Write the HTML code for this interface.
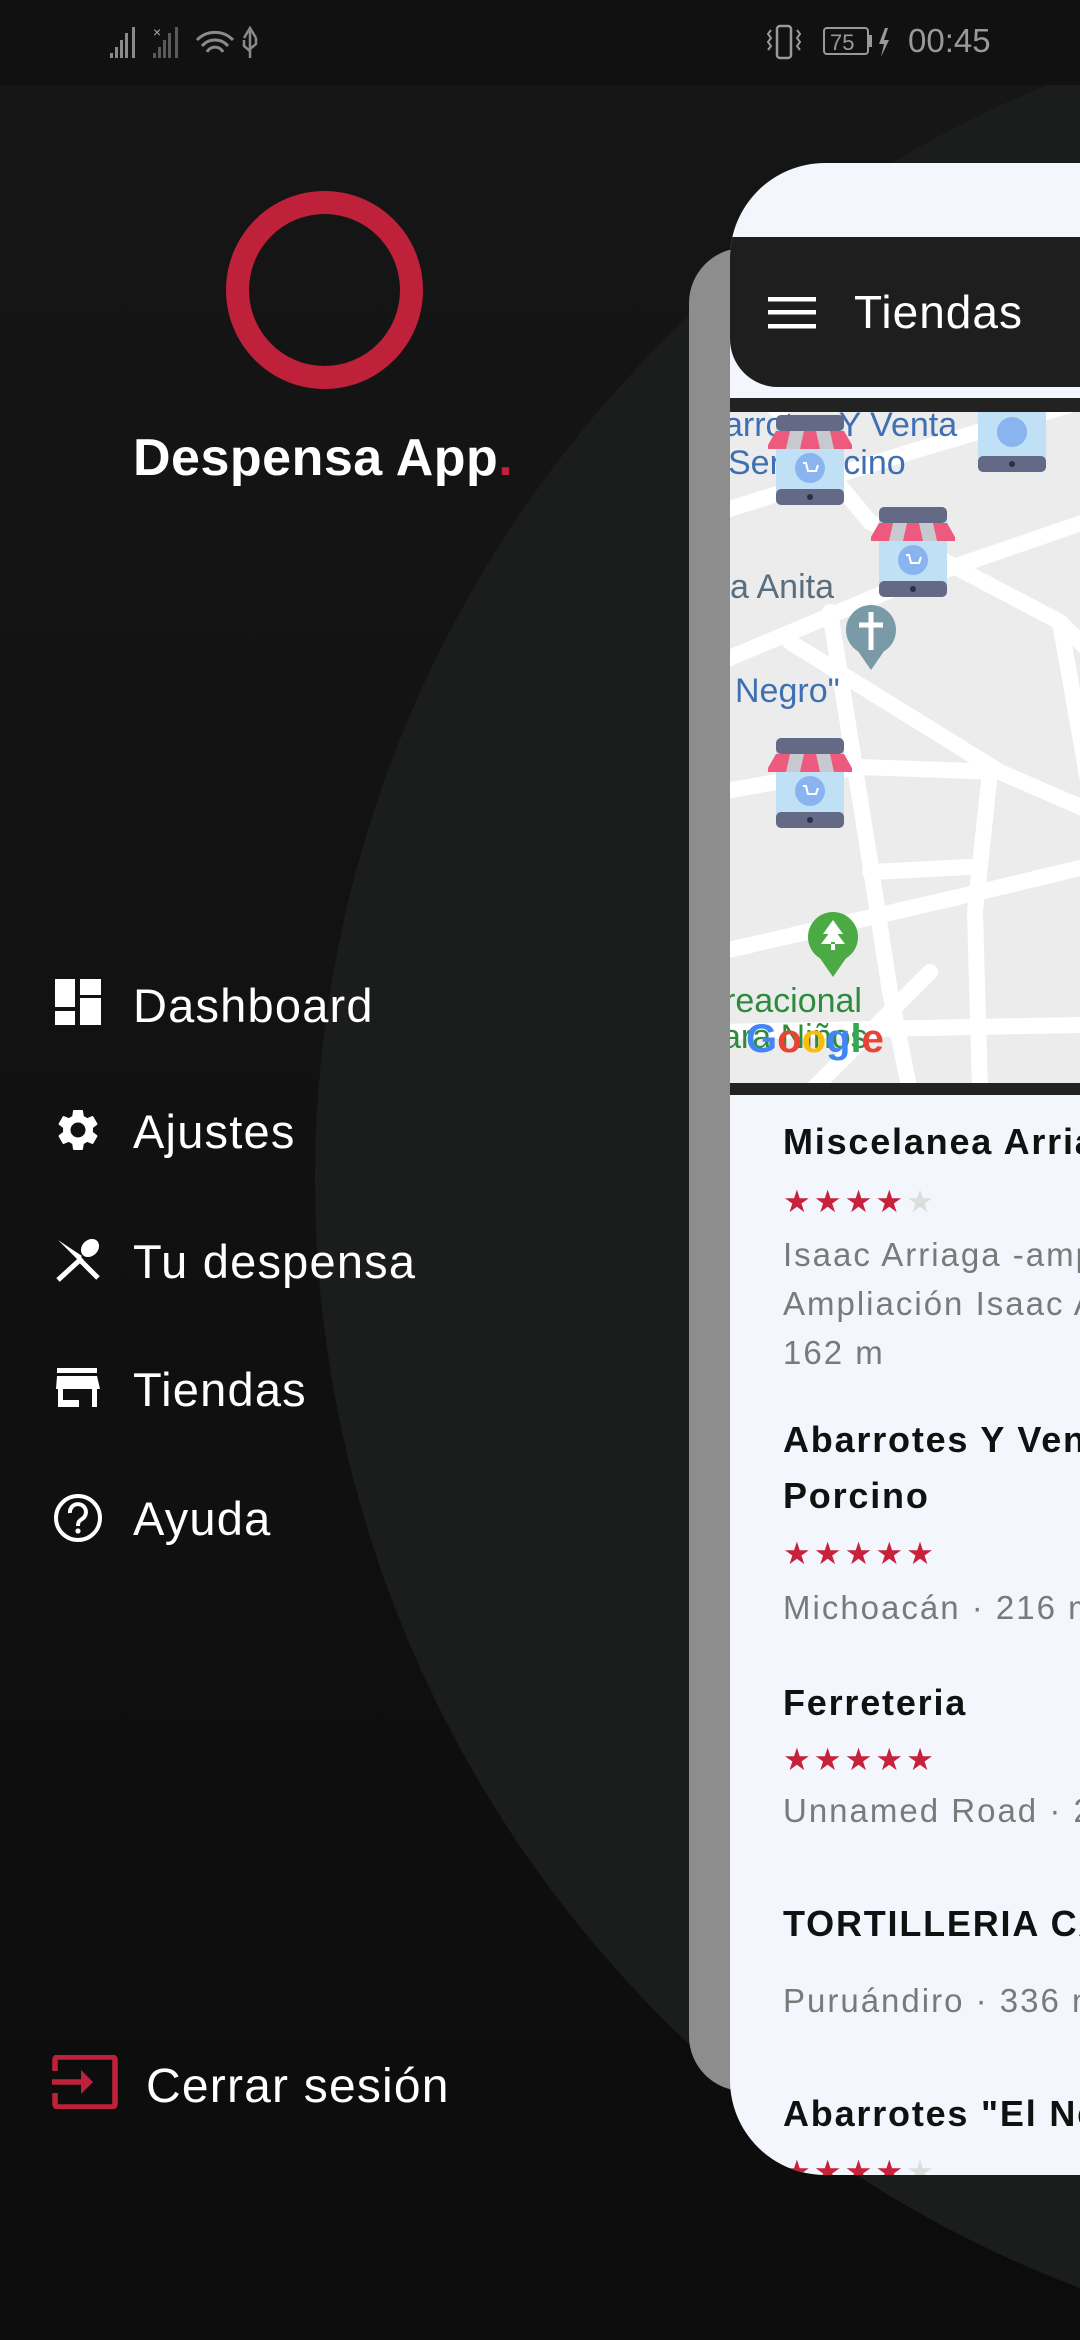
<!DOCTYPE html>
<html><head><meta charset="utf-8"><style>
*{margin:0;padding:0;box-sizing:border-box}
html,body{width:1080px;height:2340px;overflow:hidden;background:#0e0e0e;font-family:"Liberation Sans",sans-serif}
#wrap{position:relative;width:1080px;height:2340px;overflow:hidden}
.abs{position:absolute}
.menu{position:absolute;left:133px;color:#fff;font-size:47px;line-height:1;letter-spacing:1.2px}
.t{position:absolute;left:53px;font-weight:bold;font-size:36px;color:#111;white-space:nowrap;letter-spacing:1.8px}
.a{position:absolute;left:53px;font-size:33px;color:#7a7a7a;white-space:nowrap;letter-spacing:2px}
.s{position:absolute;left:53px;color:#c8213b;font-size:31px;letter-spacing:3px}
</style></head><body><div id="wrap">
<div class="abs" style="left:0;top:0;width:1080px;height:2340px;background:linear-gradient(#161616,#0c0c0c)"></div>
<div class="abs" style="left:315px;top:-5px;width:2370px;height:2370px;border-radius:50%;background:#1b1c1c"></div>
<!-- status bar -->
<div class="abs" style="left:0;top:0;width:1080px;height:85px;background:#111"></div>
<svg class="abs" style="left:100px;top:20px" width="180" height="45">
<g fill="#8a8a8a"><rect x="10" y="33" width="3" height="5"/><rect x="15" y="27" width="3" height="11"/><rect x="20" y="20" width="3" height="18"/><rect x="25" y="13" width="3" height="25"/><rect x="32" y="7" width="3" height="31"/>
<rect x="53" y="33" width="3" height="5" opacity=".6"/><rect x="58" y="27" width="3" height="11" opacity=".6"/><rect x="63" y="20" width="3" height="18" opacity=".6"/><rect x="68" y="13" width="3" height="25" opacity=".6"/><rect x="75" y="7" width="3" height="31" opacity=".6"/>
<text x="53" y="17" font-size="14" fill="#aaa">×</text></g>
<path d="M97 20 a25 25 0 0 1 36 0 M102 26 a17 17 0 0 1 26 0 M107 32 a9 9 0 0 1 16 0" stroke="#8a8a8a" stroke-width="3" fill="none"/>
<path d="M150 8 v30 M144 18 l6 -10 l6 10 M144 20 v6 l6 5 M156 18 v6 l-6 5" stroke="#8a8a8a" stroke-width="2.5" fill="none"/>
</svg>
<svg class="abs" style="left:765px;top:22px" width="130" height="40">
<rect x="12" y="4" width="14" height="32" rx="3" stroke="#999" stroke-width="2.5" fill="none"/>
<path d="M6 8 l-3 4 l3 4 l-3 4 l3 4 l-3 4 M32 8 l3 4 l-3 4 l3 4 l-3 4 l3 4" stroke="#999" stroke-width="2" fill="none"/>
<rect x="59" y="6" width="44" height="26" rx="3" stroke="#999" stroke-width="2" fill="none"/><rect x="104" y="13" width="3" height="12" fill="#999"/>
<text x="65" y="28" font-size="22" fill="#999" font-family="Liberation Sans">75</text>
<path d="M120 6 l-6 16 h5 l-3 13 l8 -17 h-5 l4 -12z" fill="#999"/>
</svg>
<div class="abs" style="left:908px;top:22px;font-size:33px;color:#999">00:45</div>
<!-- logo -->
<div class="abs" style="left:226px;top:191px;width:197px;height:198px;border-radius:50%;border:23px solid #c0213a"></div>
<div class="abs" style="left:133px;top:428px;font-size:52px;font-weight:bold;color:#fff;letter-spacing:0.5px">Despensa App<span style="color:#c0213a">.</span></div>
<!-- menu -->
<svg class="abs" style="left:55px;top:979px" width="46" height="46" fill="#fff"><rect x="0" y="0" width="20" height="28"/><rect x="25" y="0" width="21" height="16"/><rect x="0" y="32" width="20" height="14"/><rect x="25" y="19" width="21" height="27"/></svg>
<div class="menu" style="top:982px">Dashboard</div>
<svg class="abs" style="left:53px;top:1105px" width="50" height="50" viewBox="0 0 24 24" fill="#fff"><path d="M19.14 12.94c.04-.3.06-.61.06-.94 0-.32-.02-.64-.07-.94l2.03-1.58a.49.49 0 0 0 .12-.61l-1.92-3.32a.49.49 0 0 0-.59-.22l-2.39.96c-.5-.38-1.03-.7-1.620-.94l-.36-2.54a.48.48 0 0 0-.48-.41h-3.84c-.24 0-.43.17-.47.41l-.36 2.54c-.59.24-1.130.57-1.62.94l-2.390-.96a.49.49 0 0 0-.59.22L2.74 8.87c-.12.21-.08.47.12.61l2.03 1.58c-.05.3-.09.63-.09.94s.02.64.07.94l-2.03 1.58a.49.49 0 0 0-.12.61l1.92 3.32c.12.22.37.29.59.22l2.39-.96c.5.38 1.03.7 1.62.94l.36 2.54c.05.24.24.41.48.41h3.84c.24 0 .44-.17.47-.41l.36-2.54c.59-.24 1.13-.56 1.62-.94l2.39.96c.22.08.47 0 .59-.22l1.92-3.32c.12-.22.07-.47-.12-.61l-2.01-1.58zM12 15.6A3.6 3.6 0 1 1 12 8.4a3.6 3.6 0 0 1 0 7.2z"/></svg>
<div class="menu" style="top:1108px">Ajustes</div>
<svg class="abs" style="left:54px;top:1236px" width="46" height="46" viewBox="0 0 46 46"><path d="M4 4 L24 24 L28 20 Z" fill="#fff"/><path d="M4 44 L28 22 M26 24 L44 42" stroke="#fff" stroke-width="5"/><ellipse cx="36" cy="12" rx="8" ry="10" transform="rotate(45 36 12)" fill="#fff"/></svg>
<div class="menu" style="top:1238px">Tu despensa</div>
<svg class="abs" style="left:55px;top:1368px" width="46" height="40" fill="#fff"><rect x="2" y="0" width="40" height="5"/><path d="M2 8 h40 l3 13 h-44 z"/><rect x="3" y="21" width="5" height="18"/><rect x="37" y="21" width="5" height="18"/><rect x="8" y="32" width="16" height="7"/></svg>
<div class="menu" style="top:1366px">Tiendas</div>
<svg class="abs" style="left:53px;top:1493px" width="50" height="50" viewBox="0 0 50 50"><circle cx="25" cy="25" r="22" stroke="#fff" stroke-width="4" fill="none"/><path d="M17 20 a8 8 0 1 1 12 6 c-3 2 -4 3 -4 7" stroke="#fff" stroke-width="4" fill="none"/><circle cx="25" cy="38" r="2.6" fill="#fff"/></svg>
<div class="menu" style="top:1495px">Ayuda</div>
<svg class="abs" style="left:52px;top:2055px" width="66" height="54" viewBox="0 0 66 54"><path d="M3 16 V5 a3 3 0 0 1 3 -3 H60 a3 3 0 0 1 3 3 V49 a3 3 0 0 1 -3 3 H6 a3 3 0 0 1 -3 -3 V38" stroke="#c0213a" stroke-width="5.5" fill="none"/><path d="M0 27 H32" stroke="#c0213a" stroke-width="5.5"/><path d="M29 15 L41 27 L29 39 Z" fill="#c0213a"/></svg>
<div class="menu" style="left:146px;top:2063px;font-size:48px">Cerrar sesión</div>
<!-- back card -->
<div class="abs" style="left:689px;top:248px;width:391px;height:1843px;border-radius:55px 0 0 55px;background:#8d8d8d"></div>
<!-- front card -->
<div class="abs" style="left:730px;top:163px;width:350px;height:2012px;border-radius:95px 0 0 95px;background:#f3f7fd;overflow:hidden">
 <div class="abs" style="left:0;top:74px;width:500px;height:150px;background:#1e1e1e;border-radius:0 0 0 48px"></div>
 <svg class="abs" style="left:38px;top:134px" width="48" height="32" fill="#fff"><rect y="0" width="48" height="4.5"/><rect y="13" width="48" height="4.5"/><rect y="27" width="48" height="4.5"/></svg>
 <div class="abs" style="left:124px;top:122px;font-size:46px;color:#fff;letter-spacing:1px">Tiendas</div>
 <div class="abs" style="left:0;top:235px;width:500px;height:14px;background:#222"></div>
 <svg class="abs" style="left:0;top:249px" width="350" height="671">
  <defs>
   <g id="st">
    <rect x="8" y="0" width="68" height="90" rx="6" fill="#bfe0f5"/>
    <rect x="8" y="0" width="68" height="16" rx="5" fill="#646a86"/>
    <rect x="8" y="74" width="68" height="16" rx="5" fill="#646a86"/>
    <circle cx="42" cy="82" r="3" fill="#2a2f45"/>
    <circle cx="42" cy="53" r="15" fill="#8ab4f0"/>
    <path d="M35 48 h3 l2 8 h8 l2 -6" stroke="#fff" stroke-width="2" fill="none"/>
    <path d="M8 16 h68 l8 14 v4 h-84 v-4z" fill="#c8c8d0"/>
    <path d="M8 16 h14 l-4 18 h-18 v-4z M36 16 h12 l4 18 h-20z M62 16 h14 l8 14 v4 h-18z" fill="#ee5a7e"/>
   </g>
  </defs>
  <rect width="500" height="671" fill="#ececec"/>
  <g stroke="#fff" stroke-width="16" fill="none" stroke-linecap="round">
   <path d="M-10 100 L180 40 L350 -10"/><path d="M-10 250 L180 170 L500 60"/>
   <path d="M60 230 L270 360 L500 460"/><path d="M40 -10 L140 110 L330 210 L420 300"/>
   <path d="M-10 540 L250 480 L500 420"/><path d="M-10 380 L130 355 L270 360"/>
   <path d="M100 200 L140 450 L160 580 L180 680"/><path d="M260 360 L245 500 L250 680"/>
   <path d="M330 210 L360 380 L500 370"/><path d="M370 450 L360 680"/>
   <path d="M-10 620 L500 610"/><path d="M80 680 L200 560"/><path d="M140 460 L240 455"/>
  </g>
  <g font-family="Liberation Sans" font-size="34" fill="#3f6fb3">
   <text x="-6" y="24">arrotes Y Venta</text><text x="-2" y="62">Ser     Porcino</text>
   <text x="0" y="186" fill="#5b6e7e">a Anita</text><text x="5" y="290">Negro"</text>
   <text x="-6" y="600" fill="#2e8b3e">reacional</text><text x="-8" y="636" fill="#2e8b3e">ara Niños</text>
  </g>
  <use href="#st" x="38" y="3"/><use href="#st" x="141" y="95"/><use href="#st" x="38" y="326"/>
  <g transform="translate(240 -30)"><rect x="8" y="0" width="68" height="90" rx="6" fill="#bfe0f5"/><rect x="8" y="74" width="68" height="16" rx="5" fill="#646a86"/><circle cx="42" cy="82" r="3" fill="#2a2f45"/><circle cx="42" cy="50" r="15" fill="#8ab4f0"/></g>
  <circle cx="141" cy="218" r="25" fill="#7a9aa8"/><path d="M123 232 L141 258 L159 232z" fill="#7a9aa8"/>
  <path d="M141 200 v38 M129 213 h24" stroke="#fff" stroke-width="5"/>
  <circle cx="103" cy="525" r="25" fill="#4caa44"/><path d="M85 539 L103 565 L121 539z" fill="#4caa44"/>
  <path d="M103 508 l-10 14 h20z M103 516 l-12 16 h24z M101 530 h4 v8 h-4z" fill="#fff"/>
  <text x="16" y="640" font-size="40" font-family="Liberation Sans" font-weight="bold"><tspan fill="#4285f4">G</tspan><tspan fill="#ea4335">o</tspan><tspan fill="#fbbc05">o</tspan><tspan fill="#4285f4">g</tspan><tspan fill="#34a853">l</tspan><tspan fill="#ea4335">e</tspan></text>
 </svg>
 <div class="abs" style="left:0;top:920px;width:500px;height:12px;background:#222"></div>
 <div class="t" style="top:958px">Miscelanea Arriaga</div>
 <div class="s" style="top:1021px">★★★★<span style="color:#ddd">★</span></div>
 <div class="a" style="top:1073px">Isaac Arriaga -ampliación</div>
 <div class="a" style="top:1122px">Ampliación Isaac Arriaga</div>
 <div class="a" style="top:1171px">162 m</div>
 <div class="t" style="top:1256px">Abarrotes Y Venta</div>
 <div class="t" style="top:1312px">Porcino</div>
 <div class="s" style="top:1373px">★★★★★</div>
 <div class="a" style="top:1426px">Michoacán · 216 m</div>
 <div class="t" style="top:1519px">Ferreteria</div>
 <div class="s" style="top:1579px">★★★★★</div>
 <div class="a" style="top:1629px">Unnamed Road · 290 m</div>
 <div class="t" style="top:1740px">TORTILLERIA CANDY</div>
 <div class="a" style="top:1819px">Puruándiro · 336 m</div>
 <div class="t" style="top:1930px">Abarrotes "El Negro"</div>
 <div class="s" style="top:1991px">★★★★<span style="color:#ddd">★</span></div>
</div>
</div></body></html>
